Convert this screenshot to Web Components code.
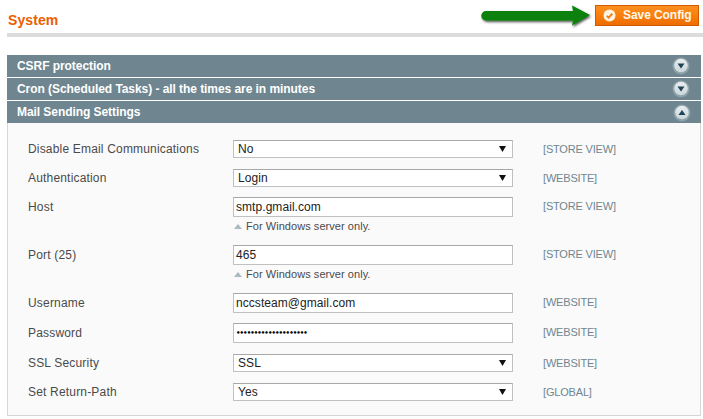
<!DOCTYPE html>
<html><head><meta charset="utf-8"><style>
html,body{margin:0;padding:0;background:#fff}
body{width:703px;height:419px;overflow:hidden;font-family:"Liberation Sans",Arial,sans-serif}
</style></head><body>
<cfg-page>
<cfg-head title="System"></cfg-head>
<cfg-bar>CSRF protection</cfg-bar>
<cfg-bar>Cron (Scheduled Tasks) - all the times are in minutes</cfg-bar>
<cfg-bar open>Mail Sending Settings</cfg-bar>
<cfg-panel>
<cfg-row label="Disable Email Communications" scope="[STORE VIEW]" type="select" value="No" style="height:29px"></cfg-row>
<cfg-row label="Authentication" scope="[WEBSITE]" type="select" value="Login" style="height:28px"></cfg-row>
<cfg-row label="Host" scope="[STORE VIEW]" type="text" value="smtp.gmail.com" note="For Windows server only." style="height:48px"></cfg-row>
<cfg-row label="Port (25)" scope="[STORE VIEW]" type="text" value="465" note="For Windows server only." style="height:48px"></cfg-row>
<cfg-row label="Username" scope="[WEBSITE]" type="text" value="nccsteam@gmail.com" style="height:30px"></cfg-row>
<cfg-row label="Password" scope="[WEBSITE]" type="password" value="••••••••••••••••••••" style="height:31px"></cfg-row>
<cfg-row label="SSL Security" scope="[WEBSITE]" type="select" value="SSL" style="height:29px"></cfg-row>
<cfg-row label="Set Return-Path" scope="[GLOBAL]" type="select" value="Yes" style="height:18px"></cfg-row>
</cfg-panel>
</cfg-page>
<script>
function def(name,html,init){
  customElements.define(name,class extends HTMLElement{
    connectedCallback(){
      if(this.shadowRoot)return;
      const r=this.attachShadow({mode:'open'});
      r.innerHTML=html;
      if(init)init.call(this,r);
    }
  });
}
def('cfg-page',`<style>:host{display:block;padding:0 2px 0 7px}</style><slot></slot>`);
def('cfg-head',`<style>
:host{display:block;height:37px;margin-right:-2px;margin-bottom:18px;box-sizing:border-box;border-bottom:4px solid #dcdcdc;position:relative}
.t{position:absolute;left:1px;top:12px;font-size:14px;line-height:16px;font-weight:bold;color:#eb5e00;letter-spacing:.1px}
.btn{position:absolute;left:588px;top:5px;width:104px;height:21px;box-sizing:border-box;border:1px solid #cf5a00;background:linear-gradient(#fb8f20,#f97f0c 50%,#ee6c00);color:#fff8ec;font-size:12px;font-weight:bold;line-height:19px;display:flex;align-items:center;white-space:nowrap;letter-spacing:-.07px}
.btn svg{margin:0 7px 0 7px;flex:none}
.arrow{position:absolute;left:472px;top:4px}
</style>
<span class="t"></span>
<svg class="arrow" width="116" height="28" viewBox="0 0 116 28">
<defs><filter id="s" x="-5%" y="-30%" width="110%" height="170%"><feDropShadow dx="1" dy="1.500" stdDeviation=".9" flood-color="#000" flood-opacity=".7"/></filter></defs>
<path d="M7 7 L94 7 L93 1.500 L111 11 L93 21.500 L94 16.500 L7 16.500 A4.750 4.750 0 0 1 7 7Z" fill="#078107" filter="url(#s)"/>
</svg>
<div class="btn"><svg width="13" height="13" viewBox="0 0 13 13"><circle cx="6.500" cy="6.500" r="6" fill="#fff3e2"/><path d="M3.800 6.800 L5.700 8.700 L9.300 4.600" fill="none" stroke="#f07a10" stroke-width="1.800"/></svg><span>Save Config</span></div>`,
function(r){r.querySelector('.t').textContent=this.getAttribute('title')});
def('cfg-bar',`<style>
:host{display:flex;align-items:center;justify-content:space-between;height:22px;margin-bottom:1px;background:#6f8690;color:#fff;font-size:12px;font-weight:bold;padding:0 10px;box-sizing:border-box;position:relative;letter-spacing:-.06px}
:host([open]){margin-bottom:0}
svg{position:absolute;right:11px;top:2px}
:host([open]) svg{right:10px;top:3px}
</style><span><slot></slot></span>
<svg width="18" height="18" viewBox="0 0 18 18"><defs><linearGradient id="g" x1="0" y1="0" x2="0" y2="1"><stop offset="0" stop-color="#e9eff1"/><stop offset="1" stop-color="#c9d6da"/></linearGradient></defs><circle cx="9" cy="9" r="8.500" fill="#8ea3aa"/><circle cx="9" cy="8.500" r="6.800" fill="url(#g)"/><path d="" fill="#1f4254"/></svg>`,
function(r){r.querySelector('path').setAttribute('d',this.hasAttribute('open')?'M9 6 L12.500 11 L5.500 11Z':'M5.500 6.500 L12.500 6.500 L9 11.500Z')});
def('cfg-panel',`<style>:host{display:block;height:293px;box-sizing:border-box;border:1px solid #d6d6d6;border-top:0;background:#fafafa;padding-top:17px}</style><slot></slot>`);
def('cfg-row',`<style>
:host{display:grid;grid-template-columns:225px 280px auto;font-size:12px;color:#444;box-sizing:border-box}
.l{padding:1px 0 0 20px;line-height:16px;color:#4a4a4a;letter-spacing:.18px}
:host([type=text]) .l,:host([type=password]) .l{padding-top:2px}
.s{padding:1px 0 0 30px;line-height:16px;color:#6f8690;font-size:11px;letter-spacing:-.18px}
.f{box-sizing:border-box;width:280px;background:#fff;border:1px solid #c0c0c0;border-top-color:#a8a8a8;color:#222;white-space:nowrap;position:relative;line-height:16px;letter-spacing:.06px}
.select{height:18px;padding-left:4px}
.text{height:20px;padding-left:2px;line-height:18px}
.password{height:20px;padding-left:2px;line-height:19px;font-family:"DejaVu Sans",sans-serif;font-weight:bold;font-size:7px;letter-spacing:-.93px;color:#000}
svg{position:absolute;right:6px;top:5px}
.n{font-size:11px;color:#4a4a4a;line-height:14px;margin-top:2px;display:flex;align-items:center;letter-spacing:.05px}
.n i{width:0;height:0;border:4px solid transparent;border-top:0;border-bottom:5px solid #a9b9bf;margin:0 4px 0 1px;flex:none}
</style>
<div class="l"></div><div><div class="f"></div></div><div class="s"></div>`,
function(r){
  const g=a=>this.getAttribute(a),t=g('type');
  r.querySelector('.l').textContent=g('label');
  r.querySelector('.s').textContent=g('scope');
  const f=r.querySelector('.f');f.classList.add(t);f.textContent=g('value');
  if(t==='select')f.insertAdjacentHTML('beforeend','<svg width="7" height="6" viewBox="0 0 7 6"><path d="M0 0H7L3.500 6Z" fill="#111"/></svg>');
  if(g('note')){const n=document.createElement('div');n.className='n';n.innerHTML='<i></i><span></span>';n.querySelector('span').textContent=g('note');f.parentNode.appendChild(n)}
});
</script>
</body></html>
